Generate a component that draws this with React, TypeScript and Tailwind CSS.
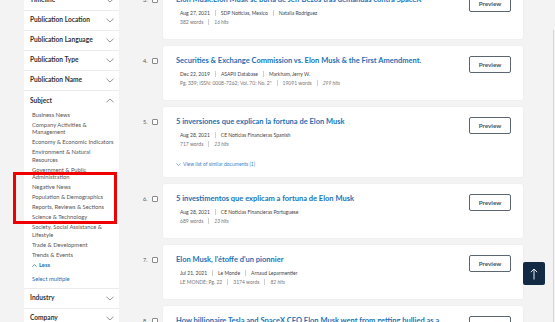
import React from "react";

type Result = {
  num: number;
  title: string;
  meta: string[];
  extra: string[];
  similar?: boolean;
};

const results: Result[] = [
  {
    num: 3,
    title: "Elon Musk:Elon Musk se burla de Jeff Bezos tras demandas contra SpaceX",
    meta: ["Aug 27, 2021", "SDP Noticias, Mexico", "Natalia Rodriguez"],
    extra: ["382 words", "16 hits"],
  },
  {
    num: 4,
    title: "Securities & Exchange Commission vs. Elon Musk & the First Amendment.",
    meta: ["Dec 22, 2019", "ASAPII Database", "Markham, Jerry W."],
    extra: ['Pg. 339; ISSN: 0008-7262; Vol. 70; No. 2"', "19091 words", "299 hits"],
  },
  {
    num: 5,
    title: "5 inversiones que explican la fortuna de Elon Musk",
    meta: ["Aug 28, 2021", "CE Noticias Financieras Spanish"],
    extra: ["717 words", "23 hits"],
    similar: true,
  },
  {
    num: 6,
    title: "5 investimentos que explicam a fortuna de Elon Musk",
    meta: ["Aug 28, 2021", "CE Noticias Financieras Portuguese"],
    extra: ["689 words", "23 hits"],
  },
  {
    num: 7,
    title: "Elon Musk, l'étoffe d'un pionnier",
    meta: ["Jul 21, 2021", "Le Monde", "Arnaud Leparmentier"],
    extra: ["LE MONDE; Pg. 22", "3174 words", "82 hits"],
  },
  {
    num: 8,
    title: "How billionaire Tesla and SpaceX CEO Elon Musk went from getting bullied as a",
    meta: [],
    extra: [],
  },
];

const filtersTop = [
  "Timeline",
  "Publication Location",
  "Publication Language",
  "Publication Type",
  "Publication Name",
];

const subjects: string[][] = [
  ["Business News"],
  ["Company Activities &", "Management"],
  ["Economy & Economic Indicators"],
  ["Environment & Natural", "Resources"],
  ["Government & Public", "Administration"],
  ["Negative News"],
  ["Population & Demographics"],
  ["Reports, Reviews & Sections"],
  ["Science & Technology"],
  ["Society, Social Assistance &", "Lifestyle"],
  ["Trade & Development"],
  ["Trends & Events"],
];

function Chevron({ up = false }: { up?: boolean }) {
  return (
    <svg width="8" height="5" viewBox="0 0 8 5" className="shrink-0">
      <polyline
        points={up ? "0.5,4.2 4,1 7.5,4.2" : "0.5,0.8 4,4 7.5,0.8"}
        fill="none"
        stroke="#7a7a7a"
        strokeWidth="0.8"
      />
    </svg>
  );
}

function FilterRow({ label, up }: { label: string; up?: boolean }) {
  return (
    <div className="flex h-[20px] items-center justify-between border-b border-[#ececec] pl-[6px] pr-[5px]">
      <span className="text-[6.6px] font-bold text-[#333]">{label}</span>
      <Chevron up={up} />
    </div>
  );
}

function Sep() {
  return <span className="mx-[5px] inline-block h-[6px] w-px bg-[#cfcfcf]" />;
}

function ResultCard({ r }: { r: Result }) {
  return (
    <div className="flex items-start">
      <div className="flex items-center gap-[5px] pt-[11px]">
        <span className="w-[4px] whitespace-nowrap text-right text-[5.5px] leading-[8px] text-[#555]">
          {r.num}.
        </span>
        <span className="h-[6px] w-[6px] rounded-[1px] border border-[#8a8a8a] bg-white" />
      </div>
      <div className="ml-[5px] flex w-[360px] items-start justify-between rounded-[2px] bg-white pb-[12.5px] pl-[13px] pr-[12px] pt-[10px] shadow-[0_0_2px_rgba(0,0,0,0.06)]">
        <div className="min-w-0">
          <div className="whitespace-nowrap text-[7.5px] font-bold leading-[10px] text-[#1d72b5]">
            {r.title}
          </div>
          {r.meta.length > 0 && (
            <div className="mt-[3.5px] flex items-center pl-[4px] text-[5px] leading-[9px] text-[#444]">
              {r.meta.map((m, i) => (
                <React.Fragment key={m}>
                  {i > 0 && <Sep />}
                  <span>{m}</span>
                </React.Fragment>
              ))}
            </div>
          )}
          {r.extra.length > 0 && (
            <div className="flex items-center pl-[4px] text-[5px] leading-[9px] text-[#777]">
              {r.extra.map((m, i) => (
                <React.Fragment key={m}>
                  {i > 0 && <Sep />}
                  <span className={i === r.extra.length - 1 ? "italic" : ""}>{m}</span>
                </React.Fragment>
              ))}
            </div>
          )}
          {r.similar && (
            <div className="-mb-[4px] mt-[11px] flex items-center gap-[2px] text-[5px] leading-[9px] text-[#3a86c8]">
              <svg width="5" height="3" viewBox="0 0 5 3">
                <polyline points="0.4,0.4 2.5,2.5 4.6,0.4" fill="none" stroke="#3a86c8" strokeWidth="0.6" />
              </svg>
              <span>View list of similar documents (1)</span>
            </div>
          )}
        </div>
        <button className="flex h-[17px] w-[42px] shrink-0 items-center justify-center rounded-[2px] border border-[#5b6670] bg-white text-[6.3px] font-bold text-[#4a525a]">
          Preview
        </button>
      </div>
    </div>
  );
}

export default function App() {
  return (
    <div className="relative h-[322px] w-[555px] overflow-hidden bg-[#f3f3f3] font-['Lato',sans-serif]">
      <div className="flex items-start">
        <aside className="ml-[24px] -mt-[9.3px] w-[95px] bg-white">
          {filtersTop.map((f) => (
            <FilterRow key={f} label={f} />
          ))}
          <div className="flex h-[20px] items-center justify-between pl-[6px] pr-[5px]">
            <span className="text-[6.6px] font-bold text-[#333]">Subject</span>
            <Chevron up />
          </div>
          <div className="border-b border-[#ececec] pb-[5px] pl-[8px]">
            <ul className="flex flex-col gap-[2.5px]">
              {subjects.map((s) => (
                <li key={s[0]} className="text-[5.8px] leading-[7.5px] text-[#555]">
                  {s.map((line, i) => (
                    <div key={i} className="whitespace-nowrap">
                      {line}
                    </div>
                  ))}
                </li>
              ))}
            </ul>
            <div className="mt-[3px] flex items-center gap-[2px] text-[5.8px] font-bold leading-[8px] text-[#1c6fb0]">
              <svg width="5" height="3" viewBox="0 0 5 3">
                <polyline points="0.4,2.6 2.5,0.5 4.6,2.6" fill="none" stroke="#1c6fb0" strokeWidth="0.7" />
              </svg>
              <span>Less</span>
            </div>
            <div className="mt-[5.5px] text-[5.8px] leading-[8px] text-[#1c6fb0]">Select multiple</div>
          </div>
          <FilterRow label="Industry" />
          <FilterRow label="Company" />
        </aside>

        <main className="ml-[24px] -mt-[15px] flex flex-col gap-[7px]">
          {results.map((r) => (
            <ResultCard key={r.num} r={r} />
          ))}
        </main>
      </div>

      {/* scrollbar track */}
      <div className="absolute right-[1px] top-[30px] h-[292px] w-px bg-[#d6d6d6]" />

      {/* back to top */}
      <button className="absolute left-[523px] top-[262px] flex h-[23px] w-[22px] items-center justify-center rounded-[2px] bg-[#132a44]">
        <svg width="8" height="12" viewBox="0 0 8 12">
          <line x1="4" y1="1" x2="4" y2="11.5" stroke="white" strokeWidth="0.9" />
          <polyline points="0.8,4.2 4,1 7.2,4.2" fill="none" stroke="white" strokeWidth="0.9" />
        </svg>
      </button>

      {/* annotation */}
      <div className="pointer-events-none absolute left-[13px] top-[172px] h-[52px] w-[104px] border-[3px] border-[#f00000]" />
    </div>
  );
}
